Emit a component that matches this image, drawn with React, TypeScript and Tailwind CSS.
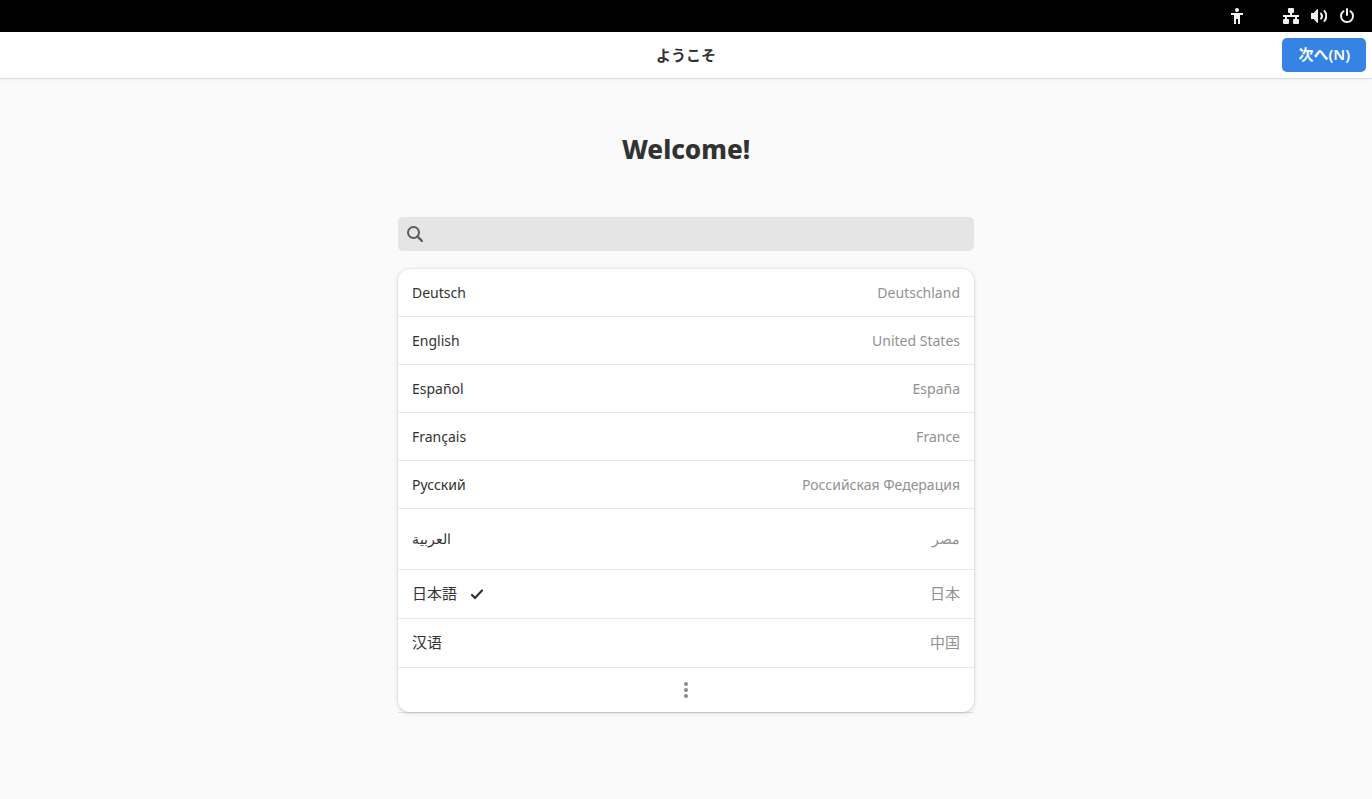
import React, { useState } from "react";

type Locale = { id: string; language: string; country: string; lang: string; size: string };

const locales: Locale[] = [
  { id: "de", language: "Deutsch", country: "Deutschland", lang: "de", size: "h-12 text-[14px]" },
  { id: "en", language: "English", country: "United States", lang: "en", size: "h-12 text-[14px]" },
  { id: "es", language: "Español", country: "España", lang: "es", size: "h-12 text-[14px]" },
  { id: "fr", language: "Français", country: "France", lang: "fr", size: "h-12 text-[14px]" },
  { id: "ru", language: "Русский", country: "Российская Федерация", lang: "ru", size: "h-12 text-[14px]" },
  { id: "ar", language: "العربية", country: "مصر", lang: "ar", size: "h-[61px] text-[14px]" },
  { id: "ja", language: "日本語", country: "日本", lang: "ja", size: "h-[49px] text-[15px]" },
  { id: "zh", language: "汉语", country: "中国", lang: "zh-CN", size: "h-[49px] text-[15px]" },
];

function AccessibilityIcon() {
  return (
    <svg width="16" height="16" viewBox="0 0 16 16" fill="currentColor" aria-hidden="true">
      <circle cx="8" cy="2" r="2" />
      <path d="M2 5h12v2h-3v9H9v-5H7v5H5V7H2z" />
    </svg>
  );
}

function NetworkIcon() {
  return (
    <svg width="16" height="16" viewBox="0 0 16 16" fill="currentColor" aria-hidden="true">
      <rect x="5" y="0" width="6" height="5" rx="1" />
      <path d="M7 4h2v3h7v2h-2v2h-2V9H4v2H2V9H0V7h7z" />
      <rect x="0" y="11" width="6" height="5" rx="1" />
      <rect x="10" y="11" width="6" height="5" rx="1" />
    </svg>
  );
}

function VolumeIcon() {
  return (
    <svg width="16" height="16" viewBox="0 0 16 16" fill="none" stroke="currentColor" strokeWidth="2" strokeLinecap="round" aria-hidden="true">
      <path d="M0 5h2.500L6.500 1H7v14h-.5l-4-4H0z" fill="currentColor" stroke="none" />
      <path d="M10 5.500a4 4 0 0 1 0 5" />
      <path d="M13.500 3a8.500 8.500 0 0 1 0 10" />
    </svg>
  );
}

function PowerIcon() {
  return (
    <svg width="16" height="16" viewBox="0 0 16 16" fill="none" stroke="currentColor" strokeWidth="2" strokeLinecap="round" aria-hidden="true">
      <path d="M4.500 3.200a6 6 0 1 0 7 0" />
      <path d="M8 1v6" />
    </svg>
  );
}

function SearchIcon() {
  return (
    <svg width="16" height="16" viewBox="0 0 16 16" fill="none" stroke="currentColor" strokeWidth="2" aria-hidden="true">
      <circle cx="6.500" cy="6.500" r="5.500" />
      <path d="M10.500 10.500l4.500 4.500" strokeLinecap="round" strokeWidth="2.400" />
    </svg>
  );
}

function CheckIcon() {
  return (
    <svg width="16" height="16" viewBox="0 0 16 16" fill="none" stroke="currentColor" strokeWidth="2.200" strokeLinecap="round" role="img" aria-label="選択中">
      <path d="M3 9l3 3L13 4.500" />
    </svg>
  );
}

export default function App() {
  const [selected, setSelected] = useState("ja");
  const [query, setQuery] = useState("");
  const visible = locales.filter((l) =>
    (l.language + " " + l.country).toLowerCase().includes(query.toLowerCase()),
  );

  return (
    <div className="flex min-h-screen flex-col bg-[#fafafa] font-['Noto_Sans','Noto_Sans_CJK_JP',sans-serif] text-[15px] text-[#323232]" lang="ja">
      <div className="flex h-8 shrink-0 items-center justify-end bg-black px-[17px] text-[#f2f2f2]">
        <button type="button" aria-label="アクセシビリティ" className="mr-[38px]"><AccessibilityIcon /></button>
        <button type="button" aria-label="システムメニュー" className="flex gap-3">
          <NetworkIcon />
          <VolumeIcon />
          <PowerIcon />
        </button>
      </div>

      <header className="grid h-[47px] shrink-0 grid-cols-[1fr_auto_1fr] items-center border-b border-[#dcdcdc] bg-white px-1.5 shadow-[0_1px_2px_rgba(0,0,0,0.05)]">
        <span />
        <h1 className="font-bold">ようこそ</h1>
        <button type="button" className="h-[34px] justify-self-end rounded-[5px] bg-[#3584e4] px-4 pb-0.5 text-[15px] font-semibold text-white">
          次へ(N)
        </button>
      </header>

      <main className="mx-auto w-full max-w-[576px] pt-[50px]">
        <h2 className="text-center text-[26px] leading-10 font-extrabold">Welcome!</h2>

        <label className="mt-12 flex h-[34px] items-center gap-2 rounded-[5px] bg-[#e5e5e5] px-[9px] text-[#5c5c5c]">
          <SearchIcon />
          <input
            type="search"
            aria-label="言語を検索"
            value={query}
            onChange={(e) => setQuery(e.target.value)}
            className="min-w-0 flex-1 bg-transparent text-[#323232] outline-none"
          />
        </label>

        <div className="mt-[18px] border-b border-[#e0e0e0]">
          <ul className="overflow-hidden rounded-xl bg-white shadow-[0_0_0_1px_rgba(0,0,0,0.03),0_1px_4px_rgba(0,0,0,0.16)]">
            {visible.map((l) => (
              <li key={l.id} className="border-b border-[#e8e8e8]">
                <button
                  type="button"
                  aria-pressed={selected === l.id}
                  onClick={() => setSelected(l.id)}
                  className={"-mb-px flex w-full items-center px-3.5 pb-0.5 " + l.size}
                >
                  <span lang={l.lang}>{l.language}</span>
                  {selected === l.id && <span className="ml-3"><CheckIcon /></span>}
                  <span lang={l.lang} className="ml-auto text-[#919191]">{l.country}</span>
                </button>
              </li>
            ))}
            <li>
              <button type="button" aria-label="その他の言語" className="flex h-11 w-full items-center justify-center text-[#8a8a8a]">
                <svg width="16" height="16" viewBox="0 0 16 16" fill="currentColor" aria-hidden="true">
                  <circle cx="8" cy="2" r="2" />
                  <circle cx="8" cy="8" r="2" />
                  <circle cx="8" cy="14" r="2" />
                </svg>
              </button>
            </li>
          </ul>
        </div>
      </main>
    </div>
  );
}
